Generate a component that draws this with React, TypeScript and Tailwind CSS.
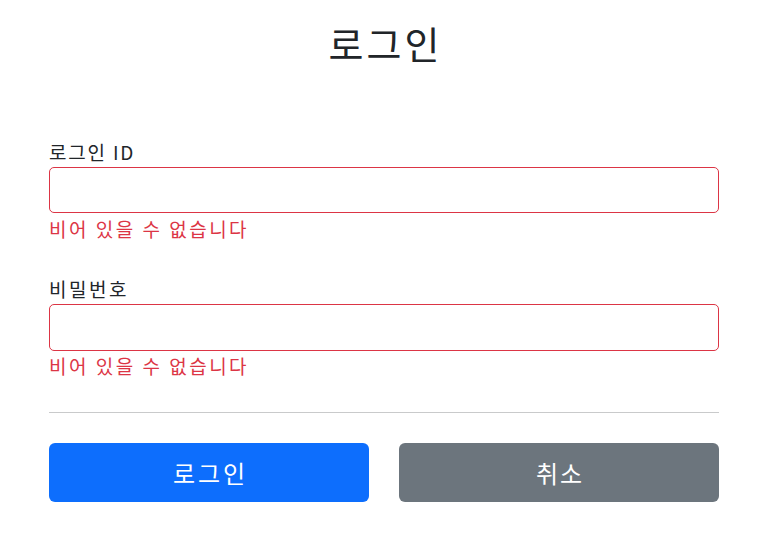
import React from "react";

const font = { fontFamily: '"Noto Sans CJK KR", "Noto Sans", sans-serif' };

export default function App() {
  return (
    <div className="min-h-[557px] bg-white pl-[49px] pr-[44px] text-[#212529]" style={font}>
      <h2 className="h-[86px] pl-[3px] text-center text-[38px] leading-[86px] font-normal tracking-[3px]">로그인</h2>
      <form className="flex flex-col">
        <label className="mt-[54px] h-[24px] text-[19px] leading-[24px] tracking-[1.8px]">로그인 ID</label>
        <input className="mt-[3px] h-[46px] w-full rounded-[5px] border border-[#dc3545] px-3 text-[19px] outline-none" />
        <div className="mt-[4px] h-[24px] text-[19px] leading-[24px] tracking-[2.5px] text-[#dc3545]">비어 있을 수 없습니다</div>

        <label className="mt-[36px] h-[24px] text-[19px] leading-[24px] tracking-[2.5px]">비밀번호</label>
        <input type="password" className="mt-[3px] h-[47px] w-full rounded-[5px] border border-[#dc3545] px-3 text-[19px] outline-none" />
        <div className="mt-[3px] h-[24px] text-[19px] leading-[24px] tracking-[2.5px] text-[#dc3545]">비어 있을 수 없습니다</div>

        <hr className="mt-[34px] border-0 border-t border-[#c9cacb]" />

        <div className="mt-[30px] grid grid-cols-2 gap-[30px]">
          <button type="button" className="h-[59px] rounded-[6px] bg-[#0d6efd] pl-[3px] text-[24px] tracking-[3px] text-white">로그인</button>
          <button type="button" className="h-[59px] rounded-[6px] bg-[#6c757d] pl-[2px] text-[24px] tracking-[2px] text-white">취소</button>
        </div>
      </form>
    </div>
  );
}
